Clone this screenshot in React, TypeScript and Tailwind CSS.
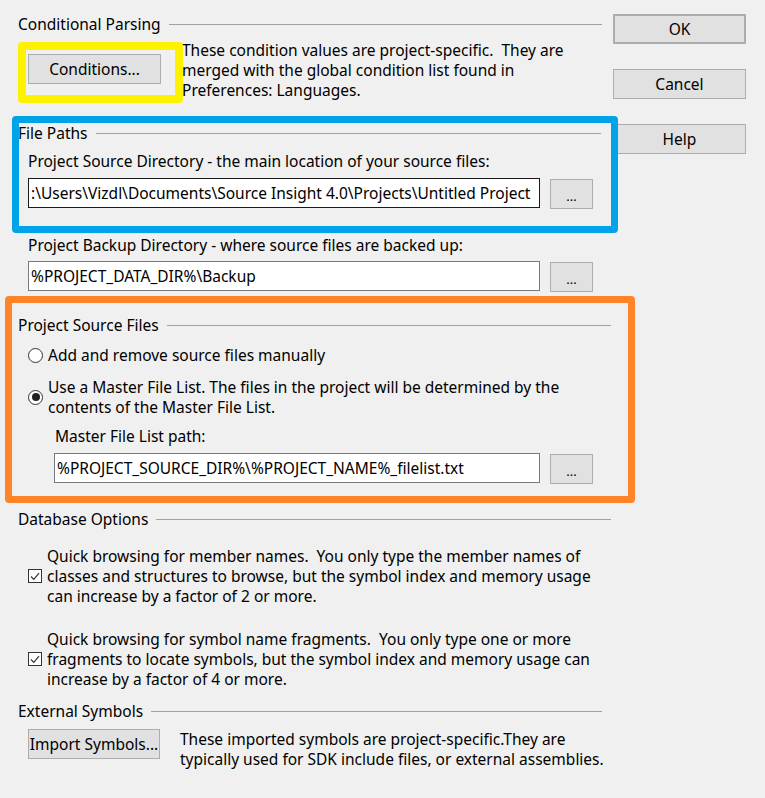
import React from 'react';

const GroupHeader = ({ title, width }: { title: string; width: string }) => (
  <div className={`flex items-center h-[20px] ${width}`}>
    <span className="whitespace-nowrap">{title}</span>
    <div className="ml-[8px] h-px flex-1 bg-[#a0a0a0]" />
  </div>
);

const DlgButton = ({ label, className = '' }: { label: string; className?: string }) => (
  <div
    className={`flex items-center justify-center bg-[#e1e1e1] border border-[#adadad] ${className}`}
  >
    {label}
  </div>
);

const PathRow = ({ value, focused = false, inputWidth }: { value: string; focused?: boolean; inputWidth: string }) => (
  <div className="flex items-start">
    <div
      className={`h-[30px] ${inputWidth} bg-white border ${focused ? 'border-[#1a1a1a]' : 'border-[#7a7a7a]'} flex items-center pl-[2px] overflow-hidden whitespace-nowrap`}
    >
      {value}
    </div>
    <DlgButton label="..." className="ml-[10px] mt-[1px] w-[43px] h-[30px] text-[13px] pt-[4px]" />
  </div>
);

const Radio = ({ checked }: { checked?: boolean }) => (
  <div className="w-[15px] h-[15px] rounded-full border border-[#333] bg-white flex items-center justify-center shrink-0">
    {checked && <div className="w-[8px] h-[8px] rounded-full bg-[#222]" />}
  </div>
);

const Check = () => (
  <div className="w-[14px] h-[14px] border border-[#333] bg-white flex items-center justify-center shrink-0">
    <svg width="10" height="9" viewBox="0 0 10 9">
      <path d="M1 4.5 L3.8 7.3 L9 1.2" fill="none" stroke="#333" strokeWidth="1.2" />
    </svg>
  </div>
);

export default function App() {
  return (
    <div className="relative w-[765px] h-[798px] bg-[#f0f0f0] overflow-hidden text-[15.5px] leading-[20px] text-black font-['Noto_Sans',sans-serif]">
      <div className="flex">
        {/* left column */}
        <div className="w-[613px] pl-[18px] flex flex-col">
          <div className="mt-[14px]">
            <GroupHeader title="Conditional Parsing" width="w-[584px]" />
          </div>
          <div className="mt-[6px] flex items-start">
            <DlgButton label="Conditions..." className="ml-[10px] mt-[14px] w-[133px] h-[30px]" />
            <div className="ml-[21px]">
              <div>These condition values are project-specific.&nbsp; They are</div>
              <div>merged with the global condition list found in</div>
              <div>Preferences: Languages.</div>
            </div>
          </div>

          <div className="mt-[23px]">
            <GroupHeader title="File Paths" width="w-[583px]" />
          </div>
          <div className="mt-[8px] ml-[10px]">Project Source Directory - the main location of your source files:</div>
          <div className="mt-[7px] ml-[10px]">
            <PathRow
              focused
              inputWidth="w-[512px]"
              value=":\Users\Vizdl\Documents\Source Insight 4.0\Projects\Untitled Project"
            />
          </div>
          <div className="mt-[26px] ml-[10px]">Project Backup Directory - where source files are backed up:</div>
          <div className="mt-[6px] ml-[10px]">
            <PathRow inputWidth="w-[512px]" value="%PROJECT_DATA_DIR%\Backup" />
          </div>

          <div className="mt-[23px]">
            <GroupHeader title="Project Source Files" width="w-[593px]" />
          </div>
          <div className="mt-[10px] ml-[10px] flex items-center gap-[5px]">
            <Radio />
            <span>Add and remove source files manually</span>
          </div>
          <div className="mt-[12px] ml-[10px] flex items-center gap-[5px]">
            <Radio checked />
            <div>
              <div>Use a Master File List. The files in the project will be determined by the</div>
              <div>contents of the Master File List.</div>
            </div>
          </div>
          <div className="mt-[9px] ml-[37px]">Master File List path:</div>
          <div className="mt-[7px] ml-[36px]">
            <PathRow inputWidth="w-[486px]" value="%PROJECT_SOURCE_DIR%\%PROJECT_NAME%_filelist.txt" />
          </div>

          <div className="mt-[25px]">
            <GroupHeader title="Database Options" width="w-[593px]" />
          </div>
          <div className="mt-[17px] ml-[10px] flex items-center gap-[5px]">
            <Check />
            <div>
              <div>Quick browsing for member names.&nbsp; You only type the member names of</div>
              <div>classes and structures to browse, but the symbol index and memory usage</div>
              <div>can increase by a factor of 2 or more.</div>
            </div>
          </div>
          <div className="mt-[23px] ml-[10px] flex items-center gap-[5px]">
            <Check />
            <div>
              <div>Quick browsing for symbol name fragments.&nbsp; You only type one or more</div>
              <div>fragments to locate symbols, but the symbol index and memory usage can</div>
              <div>increase by a factor of 4 or more.</div>
            </div>
          </div>

          <div className="mt-[12px]">
            <GroupHeader title="External Symbols" width="w-[584px]" />
          </div>
          <div className="mt-[8px] flex items-start">
            <DlgButton label="Import Symbols..." className="ml-[10px] w-[132px] h-[30px]" />
            <div className="ml-[20px]">
              <div>These imported symbols are project-specific.They are</div>
              <div>typically used for SDK include files, or external assemblies.</div>
            </div>
          </div>
        </div>

        {/* right column */}
        <div className="pt-[14px] flex flex-col gap-[25px]">
          <DlgButton label="OK" className="w-[133px] h-[30px] border-2 border-[#0078d7]" />
          <DlgButton label="Cancel" className="w-[133px] h-[30px]" />
          <DlgButton label="Help" className="w-[133px] h-[30px]" />
        </div>
      </div>

      {/* annotation highlights drawn over the dialog */}
      <div className="absolute left-[18px] top-[42px] w-[165px] h-[61px] border-[8px] border-[#fff200] rounded-[4px] pointer-events-none" />
      <div className="absolute left-[12px] top-[116px] w-[606px] h-[117px] border-[7px] border-[#00a2e8] rounded-[4px] pointer-events-none" />
      <div className="absolute left-[5px] top-[296px] w-[630px] h-[207px] border-[7px] border-[#ff8327] rounded-[4px] pointer-events-none" />
    </div>
  );
}
